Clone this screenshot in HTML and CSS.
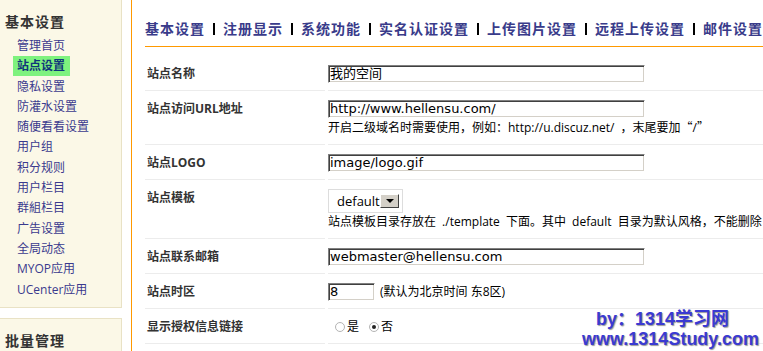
FILE: index.html
```html
<!doctype html>
<html lang="zh-CN">
<head>
<meta charset="utf-8">
<title>站点设置</title>
<link rel="stylesheet" href="styles.css">
</head>
<body>
<div class="page">
  <aside class="side">
    <div class="box first">
      <h3>基本设置</h3>
      <ul class="menu">
        <li><a>管理首页</a></li>
        <li><a class="on">站点设置</a></li>
        <li><a>隐私设置</a></li>
        <li><a>防灌水设置</a></li>
        <li><a>随便看看设置</a></li>
        <li><a>用户组</a></li>
        <li><a>积分规则</a></li>
        <li><a>用户栏目</a></li>
        <li><a>群組栏目</a></li>
        <li><a>广告设置</a></li>
        <li><a>全局动态</a></li>
        <li><a>MYOP应用</a></li>
        <li><a>UCenter应用</a></li>
      </ul>
    </div>
    <div class="box">
      <h3>批量管理</h3>
    </div>
  </aside>

  <main class="main">
    <nav class="tabs">
      <a>基本设置</a><span class="sep"></span>
      <a>注册显示</a><span class="sep"></span>
      <a>系统功能</a><span class="sep"></span>
      <a>实名认证设置</a><span class="sep"></span>
      <a>上传图片设置</a><span class="sep"></span>
      <a>远程上传设置</a><span class="sep"></span>
      <a>邮件设置</a>
    </nav>

    <div class="form">
      <div class="row">
        <div class="label">站点名称</div>
        <div class="field"><div class="input">我的空间</div></div>
      </div>
      <div class="row">
        <div class="label">站点访问URL地址</div>
        <div class="field">
          <div class="input">http://www.hellensu.com/</div>
          <div class="hint">开启二级域名时需要使用，例如：http://u.discuz.net/ ，末尾要加<span class="cjk">“</span>/<span class="cjk">”</span></div>
        </div>
      </div>
      <div class="row">
        <div class="label">站点LOGO</div>
        <div class="field"><div class="input">image/logo.gif</div></div>
      </div>
      <div class="row">
        <div class="label">站点模板</div>
        <div class="field">
          <div class="select">default<span class="drop"><i></i></span></div>
          <div class="hint">站点模板目录存放在 ./template 下面。其中 default 目录为默认风格，不能删除</div>
        </div>
      </div>
      <div class="row">
        <div class="label">站点联系邮箱</div>
        <div class="field"><div class="input">webmaster@hellensu.com</div></div>
      </div>
      <div class="row">
        <div class="label">站点时区</div>
        <div class="field inline"><div class="input short">8</div><span class="note">(默认为北京时间 东8区)</span></div>
      </div>
      <div class="row">
        <div class="label">显示授权信息链接</div>
        <div class="field inline radios">
          <span class="radio"></span><span>是</span>
          <span class="radio checked"></span><span>否</span>
        </div>
      </div>
    </div>

    <div class="mark">
      <div class="l1">by：1314学习网</div>
      <div class="l2">www.1314Study.com</div>
    </div>
  </main>
</div>
</body>
</html>
```

FILE: styles.css
```css
html,body{margin:0;padding:0;background:#fff;overflow:hidden;}
body{font-family:"Open Sans","Noto Sans CJK SC",sans-serif;font-size:12px;color:#000;}

.page{display:flex;width:1100px;height:351px;}

/* sidebar */
.side{width:122px;flex:none;margin-right:9px;}
.box{background:#fbf8e7;border:1px solid #e9e2c5;border-left:none;margin-bottom:10px;}
.box.first{border-top:none;padding:12px 0 7px;}
.box h3{margin:0;padding-left:5px;font-size:14px;line-height:20px;letter-spacing:1px;color:#333;font-weight:700;}
.box:not(.first) h3{padding-top:12px;padding-bottom:20px;}
.menu{list-style:none;margin:4px 0 0;padding:0;}
.menu li{line-height:20.3px;height:20.3px;}
.menu a{display:inline-block;margin-left:13px;padding:0 5px 0 4px;color:#3a3a8e;}
.menu a.on{background:#7ef27e;color:#10357a;font-weight:700;height:20px;}

/* main */
.main{flex:1;border-left:1px solid #f90;padding-left:13px;position:relative;}

.tabs{display:flex;align-items:center;padding:20px 0 8px;line-height:18px;border-bottom:1px solid #f90;}
.tabs a{font-size:14px;font-weight:700;letter-spacing:1px;color:#393b8a;white-space:nowrap;}
.tabs .sep{width:2px;height:12px;background:#000;margin:0 8px;}

.form{margin-top:9px;}
.row{display:grid;grid-template-columns:180px 1fr;column-gap:3px;}
.row > div{border-bottom:1px solid #ececec;padding:9px 0 7px;line-height:18px;}
.label{padding-left:2px !important;font-weight:700;color:#333;}
.field{white-space:nowrap;}
.field.inline{display:flex;align-items:center;}

.input{box-sizing:border-box;width:317px;height:18px;padding:0 1px;line-height:16px;
  border:1px solid;border-color:#808080 #fff #fff #808080;
  box-shadow:inset 1px 1px #404040,inset -1px -1px #d4d0c8;
  font-family:"DejaVu Sans","Noto Sans CJK SC",sans-serif;font-size:13px;overflow:hidden;}
.input.short{width:47px;}
.note{margin-left:5px;}
.hint{line-height:18px;word-spacing:3px;}
.cjk{font-family:"Noto Sans CJK SC",sans-serif;}

.select{box-sizing:border-box;display:inline-flex;align-items:center;width:75px;height:24px;
  border:1px solid #ddd;padding-left:8px;font-size:13px;}
.drop{width:19px;height:14px;margin-left:auto;margin-right:3px;box-sizing:border-box;background:#d4d0c8;
  border:1px solid;border-color:#fff #404040 #404040 #fff;display:flex;align-items:center;justify-content:center;}
.drop i{width:0;height:0;border-left:4px solid transparent;border-right:4px solid transparent;border-top:4px solid #000;}

.radios span{display:inline-block;}
.radio{box-sizing:border-box;width:10px;height:10px;border-radius:50%;border:1px solid #b4b4b4;background:#fff;
  margin:0 2px 0 7px;position:relative;}
.radio + span{margin-right:3px;}
.radio.checked::after{content:"";position:absolute;left:2px;top:2px;width:4px;height:4px;border-radius:50%;background:#222;}

/* watermark */
.mark{position:absolute;left:450px;top:309px;font-family:"Liberation Sans","Noto Sans CJK SC",sans-serif;
  font-weight:700;font-size:18px;line-height:20px;color:#3a3ad2;text-shadow:1px 1px 1px #999;white-space:nowrap;}
.mark .l1{padding-left:14px;}
```
